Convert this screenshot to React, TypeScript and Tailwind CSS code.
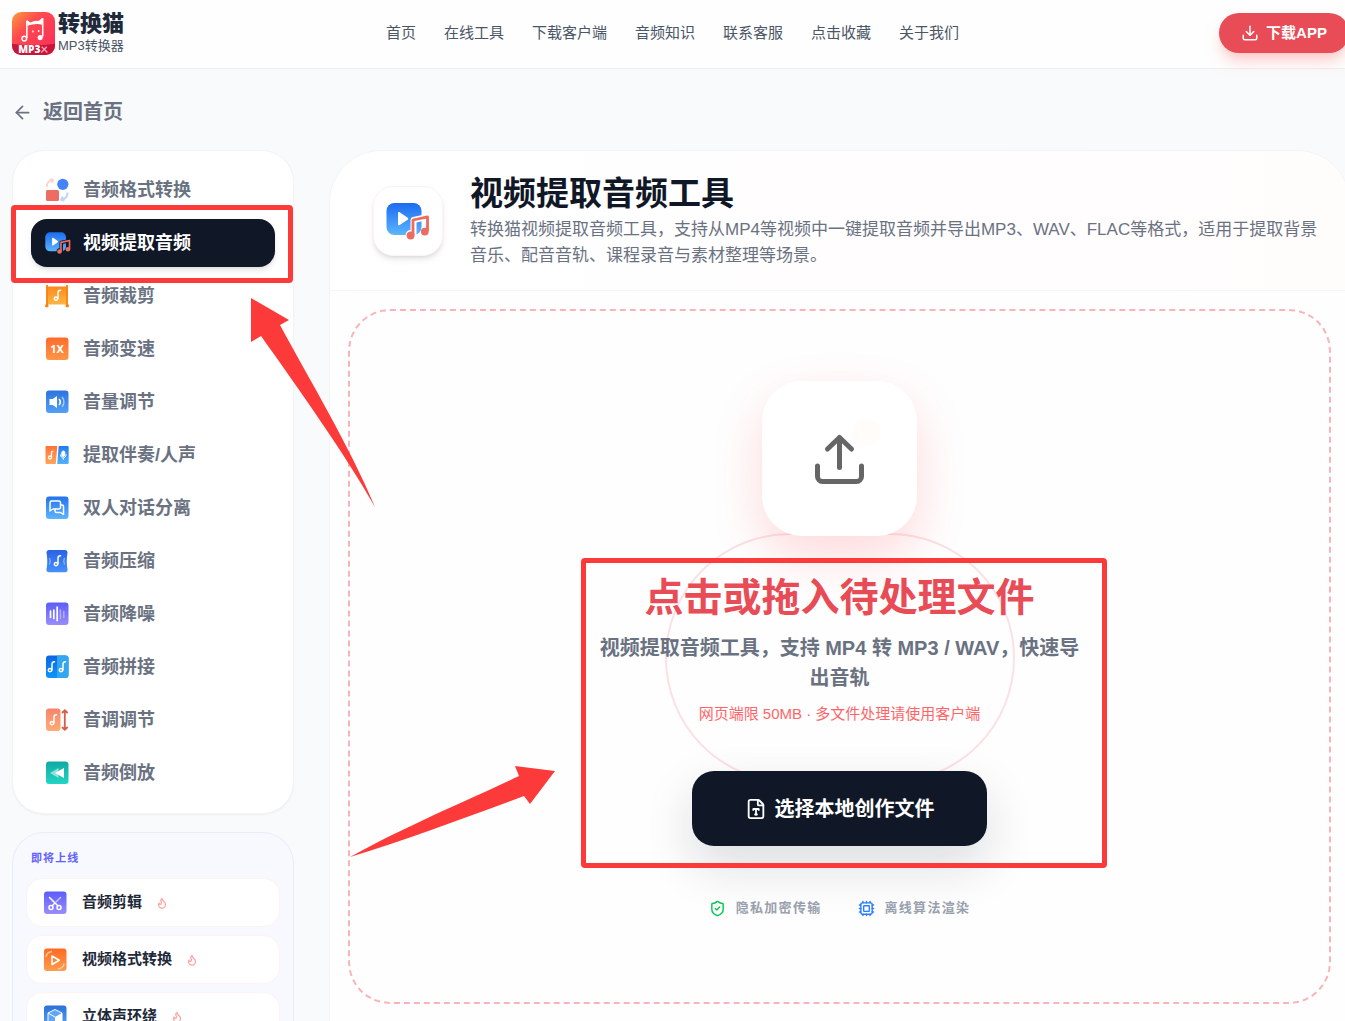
import type { ReactNode } from "react";
import {
  ArrowLeft,
  Cpu,
  Download,
  FileType,
  Flame,
  ShieldCheck,
} from "lucide-react";

interface Tool {
  label: string;
  icon: ReactNode;
}

interface GradProps {
  id: string;
  from: string;
  to: string;
}

const Grad = ({ id, from, to }: GradProps) => (
  <linearGradient id={id} x1="0" y1="0" x2="0" y2="1">
    <stop offset="0" stopColor={from} />
    <stop offset="1" stopColor={to} />
  </linearGradient>
);

interface TileProps extends GradProps {
  children: ReactNode;
}

// 圆角渐变底 + 图形
const Tile = ({ id, from, to, children }: TileProps) => (
  <svg viewBox="0 0 24 24" className="size-6 shrink-0" fill="none" aria-hidden="true">
    <defs>
      <Grad id={id} from={from} to={to} />
    </defs>
    <rect x="1" y="0.5" width="22.500" height="22.500" rx="3" fill={`url(#${id})`} />
    {children}
  </svg>
);

const Note = ({ x, y }: { x: number; y: number }) => (
  <g transform={`translate(${x} ${y})`} stroke="#fff" strokeWidth="1.5" strokeLinecap="round" fill="none">
    <circle cx="2" cy="8.600" r="1.700" />
    <path d="M4 8.600V2.600c0-1.300.8-2.200 2.500-2.300" />
  </g>
);

const VideoAudioIcon = ({ id, className, outline }: { id: string; className: string; outline?: string }) => (
  <svg viewBox="0 0 44 38" className={className} fill="none" aria-hidden="true">
    <defs>
      <Grad id={id} from="#1b6cf0" to="#5cb5ff" />
    </defs>
    <rect x="0.5" y="1" width="35" height="32" rx="8" fill={`url(#${id})`} />
    <path d="M12 11v11.200c0 .9.900 1.400 1.700.9l8-5.400c.7-.5.7-1.500 0-1.900l-8-5.600c-.8-.5-1.700 0-1.700.8z" fill="#fff" />
    {outline && (
      <g stroke={outline} strokeWidth="6">
        <path d="M27.500 32.500V18L41.500 15V29" strokeLinejoin="round" />
        <circle cx="24.600" cy="33" r="2" />
      </g>
    )}
    <path d="M27 33V18L41.500 14.800V29" stroke="#ef6b5f" strokeWidth="2.800" strokeLinejoin="round" />
    <circle cx="24.600" cy="33.500" r="3.900" fill="#ef6b5f" />
    <circle cx="38.800" cy="29.600" r="3.900" fill="#ef6b5f" />
  </svg>
);

const tools: Tool[] = [
  {
    label: "音频格式转换",
    icon: (
      <svg viewBox="0 0 24 24" className="size-6 shrink-0" fill="none" aria-hidden="true">
        <circle cx="17.8" cy="6.300" r="5.600" fill="#4584f7" />
        <rect x="1" y="12" width="13" height="11" rx="1.500" fill="#ee6c63" />
        <path d="M1.800 9c0-4 2-6.500 6-7M5 1l3 .8-1.300 3.200" stroke="#fbd5d2" strokeWidth="2" />
        <path d="M22.500 14.500c0 4-2 6.500-6 7M19.500 22.500l-3.300-.8 1.500-3.200" stroke="#bcd5fd" strokeWidth="2" />
      </svg>
    ),
  },
  {
    label: "视频提取音频",
    icon: <VideoAudioIcon id="va-small" className="h-6 w-[26px] shrink-0" outline="#111827" />,
  },
  {
    label: "音频裁剪",
    icon: (
      <svg viewBox="0 0 24 24" className="size-6 shrink-0" fill="none" aria-hidden="true">
        <defs>
          <Grad id="cut" from="#ff8a1e" to="#ffb546" />
        </defs>
        <rect x="1.500" y="2.500" width="21" height="18" fill="url(#cut)" />
        <path d="M2 1v20.500M22 1v20.500" stroke="#f98314" strokeWidth="1.800" />
        <circle cx="1.800" cy="21.800" r="1.800" fill="#f98314" />
        <circle cx="22.200" cy="21.800" r="1.800" fill="#f98314" />
        <Note x={9} y={6} />
      </svg>
    ),
  },
  {
    label: "音频变速",
    icon: (
      <Tile id="speed" from="#ff6a2a" to="#ff9647">
        <text x="12" y="16" textAnchor="middle" fill="#fff" className="font-['Noto_Sans'] text-[11px] font-bold">
          1X
        </text>
      </Tile>
    ),
  },
  {
    label: "音量调节",
    icon: (
      <Tile id="volume" from="#2d74dc" to="#549ff8">
        <path d="M4.500 9h3.200l4.300-3v12l-4.300-3H4.500z" fill="#fff" />
        <path d="M14 9c1.600 1.800 1.600 4.200 0 6" stroke="#fff" strokeWidth="1.600" />
        <path d="M17 7c2.500 2.800 2.500 7 0 9.800" stroke="#a9cdfb" strokeWidth="1.400" />
      </Tile>
    ),
  },
  {
    label: "提取伴奏/人声",
    icon: (
      <svg viewBox="0 0 24 24" className="size-6 shrink-0" fill="none" aria-hidden="true">
        <defs>
          <Grad id="accomp" from="#ff7435" to="#ffa55c" />
          <Grad id="vocal" from="#1f7bea" to="#55b3ff" />
        </defs>
        <path d="M1.500 3h10.800l-1.500 18H1.500a1 1 0 0 1-1-1V4a1 1 0 0 1 1-1z" fill="url(#accomp)" />
        <path d="M13.700 3h9a1 1 0 0 1 1 1v16a1 1 0 0 1-1 1H12.200z" fill="url(#vocal)" />
        <g stroke="#fff" fill="none">
          <circle cx="5" cy="14.500" r="1.500" strokeWidth="1.300" />
          <path d="M6.500 14.500V9.500c0-.8.600-1.300 1.800-1.300" strokeWidth="1.300" />
          <rect x="16.800" y="8" width="3" height="5.500" rx="1.500" fill="#fff" />
          <path d="M15.500 11.500c.2 4.500 5.400 4.500 5.600 0M18.300 15v1.800" />
        </g>
      </svg>
    ),
  },
  {
    label: "双人对话分离",
    icon: (
      <Tile id="dialog" from="#2374ea" to="#5fb4ff">
        <path d="M6 5h8a1.500 1.500 0 0 1 1.500 1.500v5A1.500 1.500 0 0 1 14 13H8l-3 2V6.500z" stroke="#fff" strokeWidth="1.500" strokeLinejoin="round" />
        <path d="M15.500 9H17a1.500 1.500 0 0 1 1.500 1.500V18.500l-3-2h-4A1.500 1.500 0 0 1 10 15v-2" stroke="#fff" strokeWidth="1.500" strokeLinejoin="round" />
      </Tile>
    ),
  },
  {
    label: "音频压缩",
    icon: (
      <svg viewBox="0 0 24 24" className="size-6 shrink-0" fill="none" aria-hidden="true">
        <defs>
          <Grad id="compress" from="#2b62e8" to="#4690fb" />
        </defs>
        <path d="M4 1h16a2.500 2.500 0 0 1 2.500 3c-1 5-1 12 0 16a2.500 2.500 0 0 1-2.500 3.300H4A2.500 2.500 0 0 1 1.500 20c1-4 1-11 0-16A2.500 2.500 0 0 1 4 1z" fill="url(#compress)" />
        <Note x={9} y={6.5} />
        <path d="M4.500 9c1 2 1 4.500 0 6.500M19.500 9c-1 2-1 4.500 0 6.500" stroke="#8fbcfd" strokeWidth="1.200" />
      </svg>
    ),
  },
  {
    label: "音频降噪",
    icon: (
      <Tile id="denoise" from="#5b5df8" to="#9a8dfb">
        <path d="M5.500 9v6.500M8.800 8v8.500M12.200 5v13.500" stroke="#fff" strokeWidth="1.700" strokeLinecap="round" />
        <path d="M15.400 8v8.500M18.800 9.500v6" stroke="#b7aefd" strokeWidth="1.500" strokeLinecap="round" />
      </Tile>
    ),
  },
  {
    label: "音频拼接",
    icon: (
      <Tile id="join" from="#0b66e0" to="#0c95fb">
        <path d="M12 .5h8.500a3 3 0 0 1 3 3V20a3 3 0 0 1-3 3H12z" fill="#32a6ee" />
        <Note x={3} y={6.5} />
        <Note x={14} y={6.5} />
      </Tile>
    ),
  },
  {
    label: "音调调节",
    icon: (
      <svg viewBox="0 0 24 24" className="size-6 shrink-0" fill="none" aria-hidden="true">
        <defs>
          <Grad id="pitch" from="#f8846c" to="#ffac74" />
        </defs>
        <rect x="1" y="0.500" width="14.500" height="22.500" rx="3" fill="url(#pitch)" />
        <Note x={5} y={6.5} />
        <path d="M19.800 3v18M17.500 4.500l2.300-2.300 2.300 2.300M17.500 19.500l2.300 2.300 2.300-2.300" stroke="#d45e4a" strokeWidth="1.800" strokeLinecap="round" />
      </svg>
    ),
  },
  {
    label: "音频倒放",
    icon: (
      <Tile id="reverse" from="#12a9a3" to="#22d6c4">
        <path d="M13.500 7v10L5 12z" fill="#8fe3da" />
        <path d="M19 7v10l-9-5z" fill="#fff" />
      </Tile>
    ),
  },
];

const upcoming: Tool[] = [
  {
    label: "音频剪辑",
    icon: (
      <Tile id="edit" from="#5b5df8" to="#9a8dfb">
        <g stroke="#fff" strokeWidth="1.500" strokeLinecap="round">
          <circle cx="8" cy="16.500" r="2" />
          <circle cx="16" cy="16.500" r="2" />
          <path d="M6.500 6.500 14.800 14.800M9.200 14.800l2-2" />
          <path d="m13 11 4.500-4.500" stroke="#c9c3fe" />
        </g>
      </Tile>
    ),
  },
  {
    label: "视频格式转换",
    icon: (
      <Tile id="vformat" from="#ff6a20" to="#ff9c4f">
        <path d="M9 8v8.500l7.200-4.200z" stroke="#fff" strokeWidth="1.600" strokeLinejoin="round" />
        <path d="M3 9c.3-3.500 2-5 6-5.500M21 15.500c-.3 3.500-2 5-6 5.500" stroke="#ffc79d" strokeWidth="1.600" />
      </Tile>
    ),
  },
  {
    label: "立体声环绕",
    icon: (
      <Tile id="stereo" from="#2a70d9" to="#5aa6fb">
        <path d="m12 4.500 7 3.500v8.500l-7 4-7-4V8z" fill="#5fa6f5" stroke="#fff" />
        <path d="m12 12 7-4v8.500l-7 4z" fill="#fff" />
        <path d="m5 8 7 4" stroke="#fff" />
      </Tile>
    ),
  },
];

const navLinks = ["首页", "在线工具", "下载客户端", "音频知识", "联系客服", "点击收藏", "关于我们"];

const Logo = () => (
  <a href="#" className="flex items-center gap-[3px]">
    <svg viewBox="0 0 42 42" className="size-[43px]" fill="none" aria-hidden="true">
      <defs>
        <linearGradient id="logo" x1="0" y1="0" x2="1" y2="1">
          <stop offset="0" stopColor="#ff9a3d" />
          <stop offset="0.350" stopColor="#ff4a50" />
          <stop offset="1" stopColor="#fb2858" />
        </linearGradient>
        <clipPath id="logo-clip">
          <rect width="42" height="42" rx="9" />
        </clipPath>
      </defs>
      <g clipPath="url(#logo-clip)">
        <rect width="42" height="42" fill="url(#logo)" />
        <path d="M0 31c14 2 28 2 42 0v11H0z" fill="#c9153c" />
      </g>
      <path d="M14.500 25.500V9l3 2.500c3-1.500 6-2 9-1.800L30 6.500V24" stroke="#fff" strokeWidth="1.500" strokeLinejoin="round" />
      <path d="M15 8l3 2.500c3-1.500 6-2 8.500-1.800L29.500 6v6.500c-4-1.500-9-1-14.500 1z" fill="#fff" />
      <circle cx="12" cy="26" r="2.300" stroke="#fff" strokeWidth="1.400" />
      <circle cx="27.500" cy="25" r="2.500" fill="#fff" />
      <path d="M20.500 18v2M26 17.500v2" stroke="#fff" strokeWidth="1.300" />
      <text x="6" y="40" fill="#fff" className="font-['Open_Sans'] text-[10px] font-extrabold">
        MP3
      </text>
      <path d="m29 34 5.500 5.500M34 34l-5.500 5.500" stroke="#f5a3b4" strokeWidth="1.400" />
    </svg>
    <span className="flex flex-col">
      <span className="text-[22px] leading-[26px] font-black text-gray-800">转换猫</span>
      <span className="text-[13px] leading-[18px] text-gray-600">MP3转换器</span>
    </span>
  </a>
);

const Header = () => (
  <header className="grid h-[69px] grid-cols-[1fr_auto_1fr] items-center border-b border-gray-200/70 bg-[#fefefe] px-3 pb-[2px]">
    <Logo />
    <nav className="flex gap-7">
      {navLinks.map((link) => (
        <a key={link} href="#" className="text-[15px] leading-5 whitespace-nowrap text-gray-600">
          {link}
        </a>
      ))}
    </nav>
    <button
      type="button"
      className="-mr-4 flex h-10 w-[130px] items-center justify-center gap-[7px] justify-self-end rounded-full bg-[#e84c56] text-[15px] font-bold whitespace-nowrap text-white shadow-lg shadow-red-200"
    >
      <Download size={18} />
      下载APP
    </button>
  </header>
);

const Sidebar = () => (
  <aside className="flex w-[282px] shrink-0 flex-col gap-[18px]">
    <nav className="flex flex-col gap-[5px] rounded-[32px] border border-gray-100 bg-white px-[18px] pt-[15px] pb-4 shadow-xs">
      {tools.map((tool) => (
        <a
          key={tool.label}
          href="#"
          className={`flex h-12 items-center gap-[14px] rounded-2xl px-[14px] text-lg font-bold ${
            tool.label === "视频提取音频"
              ? "bg-gray-900 text-white shadow-md"
              : "text-gray-500"
          }`}
        >
          <span className="flex w-6">{tool.icon}</span>
          {tool.label}
        </a>
      ))}
    </nav>

    <section className="flex flex-col rounded-[32px] border border-indigo-100/70 bg-[#f8f9fe] px-[13px] pt-4 pb-4">
      <h2 className="mb-[11px] px-[5px] text-[11px] leading-[18px] font-bold tracking-widest text-indigo-500">
        即将上线
      </h2>
      <div className="flex flex-col gap-2">
        {upcoming.map((tool) => (
          <a
            key={tool.label}
            href="#"
            className="flex h-[49px] items-center rounded-2xl border border-red-50 bg-white px-4 text-[15px] font-bold text-gray-800"
          >
            {tool.icon}
            <span className="mr-[14px] ml-[15px]">{tool.label}</span>
            <Flame size={12} strokeWidth={2.5} className="text-red-300" />
          </a>
        ))}
      </div>
    </section>
  </aside>
);

const UploadZone = () => (
  <div className="flex flex-col items-center rounded-[42px] border-2 border-dashed border-[#f8b4b9] pt-[70px] pb-[84px]">
    <div className="relative z-10 flex size-[155px] items-center justify-center rounded-[40px] bg-white shadow-[0_20px_50px_rgba(255,70,80,0.2)]">
      <svg viewBox="0 0 80 80" className="size-20" fill="none" aria-hidden="true">
        <circle cx="66" cy="14" r="14" fill="#fffcfa" />
        <path d="M39.500 48.500V18.500M27.500 30l12-11.500 12 11.500M17.500 47v10.500a5 5 0 0 0 5 5h34a5 5 0 0 0 5-5V47" stroke="#666" strokeWidth="5" strokeLinecap="round" strokeLinejoin="round" />
      </svg>
    </div>

    <div className="relative flex flex-col items-center">
      <div className="absolute -top-[3px] left-1/2 h-[250px] w-[350px] -translate-x-1/2 rounded-full border-2 border-[#fce1e4]" />
      <h2 className="relative mt-[38px] text-[39px] leading-[48px] font-bold text-[#e84c56]">
        点击或拖入待处理文件
      </h2>
      <p className="relative mt-[11px] w-[490px] text-center text-xl leading-[30px] font-bold text-gray-500">
        视频提取音频工具，支持 MP4 转 MP3 / WAV，快速导出音轨
      </p>
      <p className="relative mt-[10px] text-[15px] leading-[22px] text-red-400">
        网页端限 50MB · 多文件处理请使用客户端
      </p>
      <button
        type="button"
        className="relative mt-[46px] flex h-[75px] w-[295px] items-center justify-center gap-2 rounded-[22px] bg-gray-900 text-xl font-bold text-white shadow-[0_20px_50px_rgba(17,24,39,0.14)]"
      >
        <FileType size={22} />
        选择本地创作文件
      </button>
    </div>

    <ul className="mt-[52px] flex gap-9 text-[13px] leading-5 font-bold tracking-widest text-gray-400">
      <li className="flex items-center gap-[10px]">
        <ShieldCheck size={17} className="text-green-500" />
        隐私加密传输
      </li>
      <li className="flex items-center gap-[10px]">
        <Cpu size={17} className="text-blue-500" />
        离线算法渲染
      </li>
    </ul>
  </div>
);

// 教程标注：红框和箭头
const Annotations = () => (
  <div className="pointer-events-none absolute inset-0 z-20" aria-hidden="true">
    <div className="absolute top-[205px] left-[11px] h-[78px] w-[282px] rounded border-5 border-[#fd3a3a]" />
    <div className="absolute top-[558px] left-[581px] h-[310px] w-[526px] rounded border-5 border-[#fd3a3a]" />
    <svg viewBox="0 0 126 212" className="absolute top-[297px] left-[250px] h-[212px] w-[126px]" fill="#fd3a3a">
      <path d="M1 1 39 23l-9 5c28 52 70 122 95 182C95 157 48 91 11 39L1 45z" />
    </svg>
    <svg viewBox="0 0 208 94" className="absolute top-[765px] left-[348px] h-[94px] w-[208px]" fill="#fd3a3a">
      <path d="M207 6 167 1l4 10C125 33 60 60 2 92c58-18 115-39 174-61l6 8z" />
    </svg>
  </div>
);

const App = () => {
  return (
    <div className="relative min-h-screen overflow-hidden bg-gray-50 font-['Liberation_Sans','Noto_Sans_CJK_SC',sans-serif]">
      <Header />

      <main className="-mr-[5px] pt-7 pb-8 pl-3">
        <a href="#" className="mb-[23px] inline-flex items-center gap-[10px] text-xl leading-[30px] font-bold text-gray-500">
          <ArrowLeft size={21} strokeWidth={2} />
          返回首页
        </a>

        <div className="flex items-start gap-[35px]">
          <Sidebar />

          <section className="min-w-0 flex-1 rounded-[52px] border border-gray-100 bg-[#fefefe] pb-20">
            <div className="flex items-start gap-[27px] rounded-t-[52px] border-b border-gray-100/80 bg-linear-to-r from-white to-[#fffcfc] pt-[25px] pr-[22px] pb-[21px] pl-[43px]">
              <div className="mt-[10px] flex size-[70px] shrink-0 items-center justify-center rounded-[20px] border border-red-50 bg-white shadow-md">
                <VideoAudioIcon id="va-large" className="h-[38px] w-11" outline="#fff" />
              </div>
              <div>
                <h1 className="mb-[5px] text-[33px] leading-9 font-bold text-gray-900">
                  视频提取音频工具
                </h1>
                <p className="text-[17px] leading-[26px] text-gray-500">
                  转换猫视频提取音频工具，支持从MP4等视频中一键提取音频并导出MP3、WAV、FLAC等格式，适用于提取背景音乐、配音音轨、课程录音与素材整理等场景。
                </p>
              </div>
            </div>

            <div className="px-[18px] pt-[18px]">
              <UploadZone />
            </div>
          </section>
        </div>
      </main>

      <Annotations />
    </div>
  );
};

export default App;
